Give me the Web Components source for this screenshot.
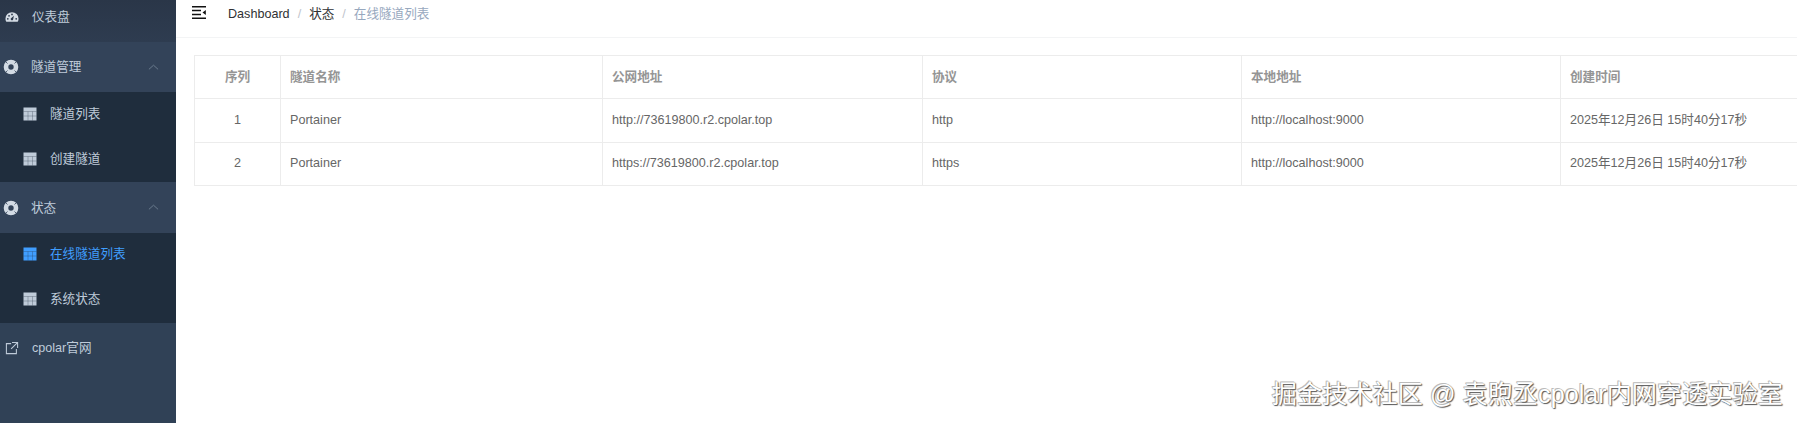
<!DOCTYPE html>
<html>
<head>
<meta charset="utf-8">
<style>
    html, body { margin: 0; height: 100%; overflow: hidden; background: #fff; }
    body { font-family: "Liberation Sans", "Noto Sans CJK SC", sans-serif; font-size: 12.6px; line-height: 14px; }
</style>
</head>
<body>
<app-shell>
    <side-nav slot="nav">
        <nav-item icon="gauge" style="--h:34px; padding-bottom:8px; background:linear-gradient(#2a3648, #2e3c50)">仪表盘</nav-item>
        <nav-group label="隧道管理">
            <nav-child>隧道列表</nav-child>
            <nav-child>创建隧道</nav-child>
        </nav-group>
        <nav-group label="状态">
            <nav-child active>在线隧道列表</nav-child>
            <nav-child>系统状态</nav-child>
        </nav-group>
        <nav-item icon="link" style="--h:50.4px">cpolar官网</nav-item>
    </side-nav>
    <top-bar></top-bar>
    <tunnel-table></tunnel-table>
    <water-mark>掘金技术社区 @ 袁煦丞cpolar内网穿透实验室</water-mark>
</app-shell>

<script>
    const ICONS = {
        gauge: '<path fill="#d3dbe4" d="M8 2.5a7.5 7.5 0 0 0-7.5 7.5c0 1.4.4 2.5 1 3.5h13c.6-1 1-2.1 1-3.5A7.5 7.5 0 0 0 8 2.5zM3.2 11a1 1 0 1 1 0-2 1 1 0 0 1 0 2zm1.4-3.4a1 1 0 1 1 0-2 1 1 0 0 1 0 2zM8 6a1 1 0 1 1 0-2 1 1 0 0 1 0 2zm1.2 5.2a1.5 1.5 0 0 1-2.6-1.4l3.6-3.2zm3.6-.2a1 1 0 1 1 0-2 1 1 0 0 1 0 2z"/>',
        link: '<path fill="none" stroke="currentColor" stroke-width="1.2" d="M7 3H1.6v11.4H13V9M8 1.6h6.4V8M14.2 1.8 7 9"/>',
        ring: '<circle cx="8" cy="8" r="5" fill="none" stroke="#d3dbe4" stroke-width="4.6"/><path d="M2.300 2.300 4.500 4.500M13.700 2.300 11.500 4.500M2.300 13.700 4.500 11.500M13.700 13.700 11.500 11.500" stroke="#334359" stroke-width=".8"/>',
        grid: '<rect x="1.500" y="1.500" width="13" height="13" fill="currentColor"/><path d="M1.500 5.500h13M1.500 10h13M6 5.500v9M10.500 5.500v9" stroke="#1f2d3d" stroke-width=".8" stroke-opacity=".35"/>'
    };
    const svgIcon = (name) => `<svg viewBox="0 0 16 16" width="16" height="16">${ICONS[name]}</svg>`;

    class AppShell extends HTMLElement {
        constructor() {
            super();
            this.attachShadow({mode: 'open'}).innerHTML = `
                <style>
                    :host { display: grid; grid-template-columns: 176px minmax(0, 1fr); grid-template-rows: 38px 1fr; height: 100vh; position: relative; overflow: hidden; }
                    .nav { grid-row: 1 / 3; display: block; }
                    .content { grid-column: 2; padding: 17px 0 0 18px; overflow: hidden; }
                </style>
                <div class="nav"><slot name="nav"></slot></div>
                <slot name="top"></slot>
                <div class="content"><slot></slot></div>`;
        }
        connectedCallback() {
            this.querySelector('top-bar').slot = 'top';
        }
    }

    class SideNav extends HTMLElement {
        constructor() {
            super();
            this.attachShadow({mode: 'open'}).innerHTML = `
                <style>
                    :host { display: block; height: 100%; background: #304156; color: #bfcbd9; }
                </style>
                <slot></slot>`;
        }
    }

    class NavItem extends HTMLElement {
        constructor() {
            super();
            this.attachShadow({mode: 'open'}).innerHTML = `
                <style>
                    :host { display: block; }
                    .row { display: flex; align-items: center; height: var(--h, 50px); padding: 0 0 0 5px; gap: 13px; }
                    svg { display: block; width: 14px; height: 14px; }
                </style>
                <div class="row"><span id="icon"></span><slot></slot></div>`;
        }
        connectedCallback() {
            this.shadowRoot.querySelector('#icon').innerHTML = svgIcon(this.getAttribute('icon'));
        }
    }

    class NavGroup extends HTMLElement {
        constructor() {
            super();
            this.attachShadow({mode: 'open'}).innerHTML = `
                <style>
                    :host { display: block; }
                    .head { display: flex; align-items: center; height: 50.4px; padding: 0 17px 0 3px; gap: 12px; background: #334359; }
                    .head svg { display: block; }
                    #label { flex: 1; }
                    .sub { background: #1f2d3d; }
                </style>
                <div class="head"><span id="icon"></span><span id="label"></span>
                    <svg viewBox="0 0 12 12" width="11" height="11"><path d="M1 8 6 3.500 11 8" fill="none" stroke="#6f7f92" stroke-width="1"/></svg>
                </div>
                <div class="sub"><slot></slot></div>`;
        }
        connectedCallback() {
            this.shadowRoot.querySelector('#icon').innerHTML = svgIcon('ring');
            this.shadowRoot.querySelector('#label').textContent = this.getAttribute('label');
        }
    }

    class NavChild extends HTMLElement {
        constructor() {
            super();
            this.attachShadow({mode: 'open'}).innerHTML = `
                <style>
                    :host { display: flex; align-items: center; box-sizing: border-box; height: 45px; padding: 0 0 2px 22px; gap: 12px; color: #bfcbd9; }
                    :host([active]) { color: #409eff; }
                    #icon svg { display: block; }
                </style>
                <span id="icon">${svgIcon('grid')}</span><slot></slot>`;
        }
    }

    class TopBar extends HTMLElement {
        constructor() {
            super();
            this.attachShadow({mode: 'open'}).innerHTML = `
                <style>
                    :host { display: flex; align-items: flex-start; height: 37px; border-bottom: 1px solid #f3f4f5; padding-left: 16px; }
                    svg { display: block; margin-top: 6px; }
                    nav { display: flex; margin: 7px 0 0 22px; line-height: 14px; color: #303133; }
                    .sep { color: #c0c4cc; margin: 0 8px; }
                    .now { color: #97a8be; }
                </style>
                <svg viewBox="0 0 14 13" width="14" height="13">
                    <path d="M0 .7h14M0 12.300h14M0 4.500h9M0 8.500h9" stroke="#111" stroke-width="1.400"/>
                    <path d="M13.800 4v5L10.500 6.500z" fill="#111"/>
                </svg>
                <nav><span>Dashboard</span><span class="sep">/</span><span>状态</span><span class="sep">/</span><span class="now">在线隧道列表</span></nav>`;
        }
    }

    const COLUMNS = ['序列', '隧道名称', '公网地址', '协议', '本地地址', '创建时间'];
    const ROWS = [
        ['1', 'Portainer', 'http://73619800.r2.cpolar.top', 'http', 'http://localhost:9000', '2025年12月26日 15时40分17秒'],
        ['2', 'Portainer', 'https://73619800.r2.cpolar.top', 'https', 'http://localhost:9000', '2025年12月26日 15时40分17秒']
    ];

    class TunnelTable extends HTMLElement {
        constructor() {
            super();
            const cells = (row, cls) => row.map((text, i) => `<div class="${cls}${i === 0 ? ' num' : ''}">${text}</div>`).join('');
            this.attachShadow({mode: 'open'}).innerHTML = `
                <style>
                    :host { display: block; width: 1700px; }
                    .grid { display: grid; grid-template-columns: 86px 322px 320px 319px 319px 334px; border: solid #ececec; border-width: 1px 0 1px 1px; color: #666; }
                    .grid > div { display: flex; align-items: center; box-sizing: border-box; height: 44px; padding: 0 0 2px 9px; border-right: 1px solid #ececec; border-bottom: 1px solid #ececec; white-space: nowrap; }
                    .grid > .head { font-weight: bold; color: #959595; height: 43px; padding-bottom: 1px; }
                    .grid > .num { justify-content: center; padding-left: 0; }
                    .grid > .last { height: 42px; border-bottom: 0; }
                </style>
                <div class="grid">${cells(COLUMNS, 'head')}${cells(ROWS[0], 'body')}${cells(ROWS[1], 'last')}</div>`;
        }
    }

    class WaterMark extends HTMLElement {
        constructor() {
            super();
            this.attachShadow({mode: 'open'}).innerHTML = `
                <style>
                    :host { position: absolute; right: 14px; bottom: 13px; font-size: 25.2px; line-height: 32px; white-space: nowrap; color: #fff; text-shadow: 1px 1px 1px #555, -1px -1px 0 #bbb, 0 0 1px #666; }
                </style>
                <slot></slot>`;
        }
    }

    customElements.define('nav-item', NavItem);
    customElements.define('nav-child', NavChild);
    customElements.define('nav-group', NavGroup);
    customElements.define('side-nav', SideNav);
    customElements.define('top-bar', TopBar);
    customElements.define('tunnel-table', TunnelTable);
    customElements.define('water-mark', WaterMark);
    customElements.define('app-shell', AppShell);
</script>
</body>
</html>
